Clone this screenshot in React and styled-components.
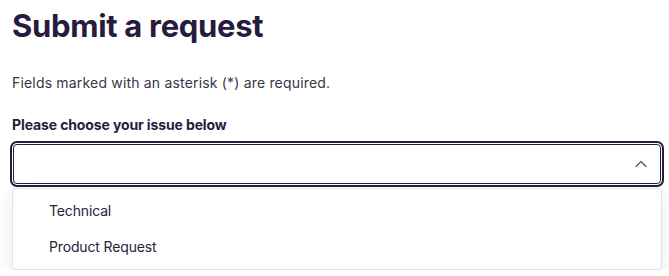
import React from "react";
import styled, { createGlobalStyle } from "styled-components";

const GlobalStyle = createGlobalStyle`
    html, body {
        margin: 0;
        padding: 0;
        background: #ffffff;
    }
    body {
        font-family: Inter, "Noto Sans", "Liberation Sans", sans-serif;
        color: #2a2238;
    }
`;

const Page = styled.div`
    padding: 7px 8px 0 12px;
`;

const Title = styled.h1`
    margin: 0;
    font-size: 31px;
    line-height: 38px;
    font-weight: 700;
    letter-spacing: -0.01em;
    color: #271c3d;
`;

const Note = styled.p`
    margin: 28px 0 0;
    font-size: 14px;
    line-height: 20px;
    letter-spacing: 0.18px;
    color: #3b3547;
`;

const Field = styled.div`
    margin-top: 22px;
    display: flex;
    flex-direction: column;
`;

const Label = styled.label`
    font-size: 14px;
    line-height: 20px;
    font-weight: 700;
    letter-spacing: -0.12px;
    color: #271c3d;
`;

const SelectBox = styled.button`
    margin: 9px 0 0 1px;
    width: 648px;
    height: 40px;
    display: flex;
    align-items: center;
    justify-content: flex-end;
    padding: 0 13px;
    box-sizing: border-box;
    background: #ffffff;
    border: 1px solid #271c3d;
    border-radius: 4px;
    box-shadow: 0 0 0 1px #ffffff, 0 0 0 3px #271c3d;
    cursor: pointer;
`;

const Menu = styled.ul`
    list-style: none;
    margin: 4px 0 0;
    padding: 4px 0;
    width: 650px;
    box-sizing: border-box;
    background: #ffffff;
    border: 1px solid #e2e2e6;
    border-radius: 4px;
    box-shadow: 0 6px 18px rgba(40, 50, 60, 0.1);
`;

const Option = styled.li`
    padding: 8px 36px;
    font-size: 14px;
    line-height: 20px;
    letter-spacing: -0.15px;
    color: #2a2238;
`;

const ChevronUp = () => (
    <svg width="12" height="8" viewBox="0 0 12 8" fill="none">
        <path d="M1 6.5L6 1.5L11 6.5" stroke="#555" strokeWidth="1.2" strokeLinecap="round" strokeLinejoin="round" />
    </svg>
);

const App = () => {
    return (
        <Page>
            <GlobalStyle />
            <Title>Submit a request</Title>
            <Note>Fields marked with an asterisk (*) are required.</Note>
            <Field>
                <Label>Please choose your issue below</Label>
                <SelectBox aria-expanded="true">
                    <ChevronUp />
                </SelectBox>
                <Menu>
                    <Option>Technical</Option>
                    <Option>Product Request</Option>
                </Menu>
            </Field>
        </Page>
    );
};

export default App;
